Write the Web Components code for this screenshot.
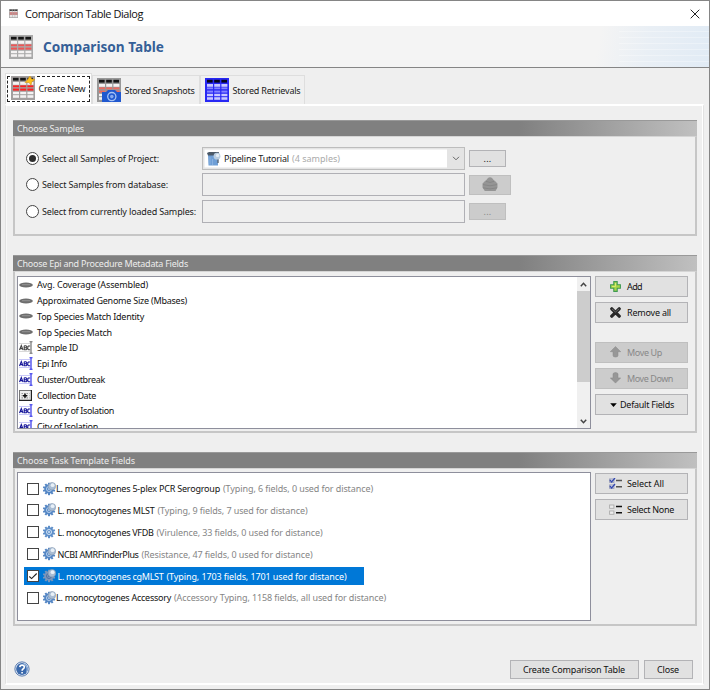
<!DOCTYPE html>
<html lang="en">
<head>
<meta charset="utf-8">
<title>Comparison Table Dialog</title>
<style>
html,body{margin:0;height:100%;overflow:hidden}
body{font:9px "Noto Sans","Open Sans",sans-serif;color:#1a1a1a}
</style>
</head>
<body>
<comparison-dialog></comparison-dialog>
<script>
const define = (name, html, setup) => customElements.define(name, class extends HTMLElement {
  connectedCallback() {
    if (this.shadowRoot) return;
    const t = document.createElement('template');
    t.innerHTML = typeof html === 'function' ? html(this) : html;
    this.attachShadow({mode: 'open'}).append(document.importNode(t.content, true));
    if (setup) setup(this);
  }
});

/* Icon drawings: [width, height, markup] */
const table = (a, b, head = '#151515', body = '#f4f2f2') => `
 <rect width="24" height="24" fill="${a}"/>
 ${[2, 9.2, 16.4].map(x => `<rect x="${x}" y="1.8" width="5.6" height="2.8" fill="${head}"/><rect x="${x}" y="6" width="6" height="2.8" fill="${body}"/><rect x="${x}" y="9.4" width="6" height="1.8" fill="${b}"/><rect x="${x}" y="12.6" width="6" height="2" fill="${b}"/><rect x="${x}" y="15.8" width="6" height="2.4" fill="${body}"/><rect x="${x}" y="19.2" width="6" height="2.6" fill="${body}"/>`).join('')}`;
const teeth = (cx, cy, r, c) => Array.from({length: 10}, (_, i) => `<rect x="${cx - 1}" y="${cy - r}" width="2" height="3" fill="${c}" transform="rotate(${i * 36} ${cx} ${cy})"/>`).join('');
const gear = (c, d) => `${teeth(6, 7, 6.2, c)}<circle cx="6" cy="7" r="4.7" fill="${c}"/><circle cx="6" cy="7" r="2.5" fill="none" stroke="${d}" stroke-width="1"/><circle cx="6" cy="7" r="1" fill="${d}"/>`;
const ball = `<circle cx="9" cy="4.2" r="3.7" fill="#a9bdd4" stroke="#8498b2" stroke-width=".6"/><circle cx="9.6" cy="3.2" r="1.9" fill="#e8f0f7"/>`;
const abc = (c, d) => `<path d="M0 2.5H11M0 10.5H11" stroke="${d}" stroke-width=".7" opacity=".35"/><path d="M.5 9 2.3 4.6 4 9M1 7.6H3.6M5.2 4.7V8.8H7.3L8 7.7 7 6.7H5.4M7 6.7 7.7 5.7 7 4.7H5.2M11.2 5H9.4L8.8 6V8L9.5 8.8H11.2" fill="none" stroke="${c}" stroke-width="1.1"/><path d="M10.5 .7H13.5M12 .7V12.3M10.5 12.3H13.5" stroke="${d}" stroke-width="1.1" fill="none"/>`;
const arrow = `M5.5 .5 10.7 5.7H8V9.5Q8 11 5.5 11T3 9.5V5.7H.3Z`;
const list = (c, l, tick) => `<g fill="#eee" stroke="${c}" stroke-width=".9"><rect x=".6" y="1" width="4.3" height="3.3"/><rect x=".6" y="7" width="4.3" height="3.3"/></g>${tick ? `<path d="M1 2 2.6 4 6 0M1 8 2.6 10 6 6" stroke="#3348b0" stroke-width="1.3" fill="none"/>` : ''}<path d="M7 2.6H13M7 8.8H13" stroke="${l}" stroke-width="1.5"/>`;
const ICONS = {
  table: [24, 24, table('#a9a9a9', '#ee5656')],
  tableNew: [24, 24, table('#a39f9f', '#ff2020') + '<path d="M19 0 20.5 3 24 3.6 20.8 5.8 20 9 18 6.5 14 6.6 16.7 3.6Z" fill="#fcc21d" stroke="#d79517" stroke-width=".6"/>'],
  tableSnap: [24, 24, table('#989898', '#ee6b60') + '<path d="M5 14H9L11 12H18L20 14H24V24H5Z" fill="#2058cf"/><circle cx="14.8" cy="18.6" r="4.1" fill="#2058cf" stroke="#a8c4f4" stroke-width="1.3"/><circle cx="14.8" cy="18.6" r="1.8" fill="#86aaf0"/>'],
  tableBlue: [24, 24, table('#2828f4', '#8484ff', '#05051c', '#c8c8ff')],
  close: [10, 10, '<path d="M.7 .7 9.3 9.3M9.3 .7 .7 9.3" stroke="#222" stroke-width="1"/>'],
  project: [14, 14, '<path d="M1 2.5H11V13.5H1.5Z" fill="#6f9fd6"/><path d="M0 1 2 0H12L11 3.5H1Z" fill="#4b5968"/><path d="M3 5V12.5M5.5 7V13" stroke="#8ab2e0" stroke-width="1"/><path d="M11 6V11" stroke="#5a6674" stroke-width="1.4"/><circle cx="10" cy="4.2" r="3.4" fill="#b9cde0"/><circle cx="10.6" cy="3.4" r="1.7" fill="#e6eef5"/>'],
  chevron: [8, 5, '<path d="M1 .8 4 3.8 7 .8" fill="none" stroke="#666" stroke-width="1"/>'],
  up: [7, 5, '<path d="M.8 4.2 3.5 1.3 6.2 4.2" fill="none" stroke="#444" stroke-width="1.5"/>'],
  down: [7, 5, '<path d="M.8 .8 3.5 3.7 6.2 .8" fill="none" stroke="#444" stroke-width="1.5"/>'],
  database: [16, 15, '<path d="M3 4Q5 2.5 5.5 1.5 8 -.8 10.5 1.5 11 2.5 13 4L15.5 6.5V10.5L13.5 14H2.8L.5 10.5V6.5Z" fill="#959595"/><path d="M1 7.6Q8 10 15 7.6M1 10.8Q8 13 15 10.8M4 4.4Q8 6.5 12 4.4" fill="none" stroke="#858585" stroke-width=".9"/>'],
  disc: [14, 6, '<ellipse cx="7" cy="3" rx="6.8" ry="2.6" fill="#6e6e6e"/><path d="M3 2.7H11" stroke="#929292" stroke-width="1.1"/>'],
  abcGrey: [14, 13, abc('#444', '#666')],
  abcBlue: [14, 13, abc('#16169a', '#2020e8')],
  date: [13, 11, '<rect x=".5" y=".5" width="12" height="10" fill="#eee" stroke="#777"/><path d="M0 10.4H13M12.4 0V11" stroke="#222" stroke-width="1.2"/><path d="M2.5 3.5H10.5M2.5 5.7H10.5M2.5 7.8H10.5" stroke="#999" stroke-width="1.2" stroke-dasharray="1.5 1"/><path d="M4 5.7H8M6 3.7V7.7" stroke="#111" stroke-width="1.6"/>'],
  plus: [11, 11, '<path d="M3.8 .6H7.2V3.8H10.4V7.2H7.2V10.4H3.8V7.2H.6V3.8H3.8Z" fill="#a8d649" stroke="#3f9a54" stroke-width="1.1"/><path d="M5.5 2V5.5H2" stroke="#d9ec70" fill="none"/>'],
  cross: [11, 11, '<path d="M1.8 1.8 9.2 9.2M9.2 1.8 1.8 9.2" stroke="#292929" stroke-width="3.3" stroke-linecap="round"/><path d="M2 2 5.5 5 9 2" stroke="#777" stroke-width=".8" fill="none"/>'],
  moveUp: [11, 12, `<path d="${arrow}" fill="#979797" stroke="#888" stroke-width=".5"/>`],
  moveDown: [11, 12, `<path d="${arrow}" transform="rotate(180 5.5 5.8)" fill="#979797" stroke="#888" stroke-width=".5"/>`],
  triangle: [7, 4, '<path d="M.2 .2H6.8L3.5 3.9Z" fill="#000"/>'],
  all: [13, 11, list('#8d93b5', '#555', true)],
  none: [13, 11, list('#aaa', '#111', false)],
  gear: [13, 14, gear('#5e8fc9', '#d5e5f5')],
  gearBall: [13, 14, gear('#5486c4', '#b9d1ec') + ball],
  gearSel: [13, 14, gear('#7c96ba', '#4d6fa2') + ball],
  check: [12, 12, '<path d="M2.3 6.5 4.6 8.6 9.7 3.5" fill="none" stroke="#222" stroke-width="1.1"/>'],
  help: [16, 16, '<circle cx="8" cy="8" r="7.1" fill="#f3f7fc" stroke="#5478ae" stroke-width="1"/><circle cx="8" cy="8" r="5.9" fill="#3a69ac"/><path d="M9 2.5A5.6 5.6 0 0 1 12 12Q14 6 9 2.5Z" fill="#96b6de"/><path d="M5.8 6.1Q6 4.1 8.1 4.1T10.3 6Q10.3 7.2 9 8 8.1 8.5 8.1 9.7M8.1 11V12.4" fill="none" stroke="#fff" stroke-width="1.6"/>']
};
define('ui-icon', el => {
  const [w, h, body] = ICONS[el.getAttribute('name')];
  const s = el.getAttribute('size');
  return `<style>:host{display:block;flex:none}svg{display:block}</style><svg width="${s || w}" height="${s || h}" viewBox="0 0 ${w} ${h}">${body}</svg>`;
});

define('ui-button', `<style>
:host{display:flex;align-items:center;justify-content:center;box-sizing:border-box;height:21px;border:1px solid #b3b3b6;background:#e1e1e1;color:#111}
:host([disabled]){background:#ccc;border-color:#bfbfbf;color:#888}
:host([side]){justify-content:flex-start;padding-left:14px}
.i{width:17px;display:flex;align-items:center}
:host(:not([side])) .i{display:none}
:host([narrow]) .i{width:10px}
</style><span class="i"><slot name="icon"></slot></span><slot></slot>`);

define('group-box', el => `<style>
:host{display:flex;flex-direction:column;box-sizing:border-box}
header{height:16px;display:flex;align-items:center;flex:none;padding-left:4px;box-sizing:border-box;color:#ececec;background:linear-gradient(90deg,#808080 0,#808080 74%,#c0c0c0);border-top:1px solid #999}
.body{flex:1;min-height:0;box-sizing:border-box;border:2px solid #c6c6c6;border-top:1px solid #d5d5d5;display:flex}
</style><header><fit-text w="${el.getAttribute('w')}">${el.getAttribute('label')}</fit-text></header><div class="body"><slot></slot></div>`);

define('radio-row', el => `<style>
:host{display:grid;grid-template-columns:27px 160px 263px auto;align-items:center;height:26.3px;justify-content:start}
i{width:11px;height:11px;border:1px solid #444;border-radius:50%;background:#fff;display:flex;justify-self:start;margin-left:11px}
:host([checked]) i::after{content:"";width:7px;height:7px;margin:2px;border-radius:50%;background:#2d2d2d}
.f{height:23px;box-sizing:border-box;border:1px solid #b0b0b5;display:flex;align-items:center}
:host([checked]) .f{background:#fff;border-color:#bdbdbd;box-shadow:inset 0 0 0 1.5px #e4e4e4}
.b{padding-left:4px}
</style><i></i><fit-text w="${el.getAttribute('w')}">${el.getAttribute('label')}</fit-text><div class="f"><slot name="field"></slot></div><div class="b"><slot name="button"></slot></div>`);

define('field-item', el => `<style>
:host{display:flex;align-items:center;height:15.75px;flex:none}
.i{width:18px}
</style><span class="i"><ui-icon name="${el.getAttribute('icon')}"></ui-icon></span><slot></slot>`);

define('task-item', el => `<style>
:host{display:flex;align-items:center;height:18px;margin-bottom:3.9px;padding-left:3px;width:337px;box-sizing:content-box;flex:none;white-space:nowrap}
:host([selected]){background:#0078d7;--name:#fff;--info:#fff}
.c{box-sizing:border-box;width:12px;height:12px;border:1px solid #444;background:#fff;margin-right:4px;flex:none;display:flex}
.c ui-icon{margin:-1px}
.n{color:var(--name,#111)}
.d{color:var(--info,#858585);margin-left:3px}
</style><span class="c">${el.hasAttribute('selected') ? '<ui-icon name="check"></ui-icon>' : ''}</span><ui-icon name="${el.getAttribute('icon')}"></ui-icon><span style="width:1.5px"></span><fit-text class="n" w="${el.getAttribute('nw')}">${el.getAttribute('label')}</fit-text><fit-text class="d" w="${el.getAttribute('dw')}">${el.getAttribute('info')}</fit-text>`);

define('scroll-bar', `<style>
:host{display:flex;flex-direction:column;width:13px;background:#f0f0f0;flex:none}
span{height:14px;display:flex;align-items:center;justify-content:center}
b{height:91px;background:#cdcdcd}
span:last-child{margin-top:auto}
</style><span><ui-icon name="up"></ui-icon></span><b></b><span><ui-icon name="down"></ui-icon></span>`);

define('tab-item', `<style>
:host{display:flex;align-items:center;box-sizing:border-box;height:29px;border:1px solid #dedede;border-bottom:0;background:#f0f0f0;padding-left:4px;gap:4.5px}
:host([active]){height:31px;background:#fff;padding:0 0 2px 5px}
.in{position:absolute;display:none;outline:1px dashed #222;outline-offset:-1px}
:host([active]) .in{display:block;left:7px;top:76px;width:83px;height:26px}
::slotted(*){position:relative}
</style><span class="in"></span><slot></slot>`);

define('comparison-dialog', `<style>
:host{display:flex;flex-direction:column;width:710px;height:690px;box-sizing:border-box;border:1px solid #858585;background:#efefef}
.title{height:25px;flex:none;background:#fff;display:flex;align-items:center;padding:0 9px 0 8px;font:11px "Open Sans","Noto Sans",sans-serif;color:#111}
.title .t{margin-left:7px;flex:1}
.head{height:42px;flex:none;box-sizing:border-box;border-bottom:1px solid #858585;display:flex;align-items:center;padding-left:8px;gap:10px;font-size:13.6px;font-weight:bold;color:#355f97;
 background:repeating-linear-gradient(0deg,transparent 0 5px,rgba(255,255,255,.3) 5px 6px) right/90px 100% no-repeat,linear-gradient(100deg,#f4f4f4 84%,#e9eff5 91%,#e1ebf5)}
.tabs{display:flex;align-items:flex-end;height:31px;flex:none;margin:5px 0 0 4px}
.pane{flex:1;min-height:0;margin:0 5px 4px 4px;box-sizing:border-box;border:1px solid #e2e2e2;border-top:2px solid #fff;border-bottom:2px solid #fff;box-shadow:inset -1px 0 #fff,inset 1px 0 #f8f8f8;padding:14px 6.5px 0 7px;display:flex;flex-direction:column}
.radios{display:flex;flex-direction:column;padding-top:8.5px}
.listwrap{display:flex;align-items:flex-start;gap:4px;padding:4px 0 0 2px}
.list{box-sizing:border-box;width:574px;border:1px solid #8e8f9c;background:#fff;display:flex}
.fields{height:153px;padding-left:1px}
.items{flex:1;height:151px;overflow:hidden;display:flex;flex-direction:column;color:#111}
.tasks{height:149px;flex-direction:column;padding:6.5px 0 0 6px}
.col{width:93px;display:flex;flex-direction:column;gap:5.3px}
.foot{display:flex;align-items:center;height:18px;margin-top:34px;padding-left:1px}
.foot ui-button{height:19px}
</style>
<div class="title"><ui-icon name="table" size="9"></ui-icon><fit-text class="t" w="118">Comparison Table Dialog</fit-text><ui-icon name="close"></ui-icon></div>
<div class="head"><ui-icon name="table"></ui-icon><fit-text w="121">Comparison Table</fit-text></div>
<div class="tabs">
<tab-item active style="width:87px"><ui-icon name="tableNew"></ui-icon><fit-text w="47" style="margin-left:-1px">Create New</fit-text></tab-item>
<tab-item style="width:108px"><ui-icon name="tableSnap"></ui-icon><fit-text w="70" style="margin-left:-1px">Stored Snapshots</fit-text></tab-item>
<tab-item style="width:105px"><ui-icon name="tableBlue"></ui-icon><fit-text w="68" style="margin-left:-1px">Stored Retrievals</fit-text></tab-item>
</div>
<div class="pane">
<group-box label="Choose Samples" w="67" style="height:116px"><div class="radios">
<radio-row checked label="Select all Samples of Project:" w="117"><div slot="field" style="display:flex;align-items:center;width:261px;height:21px"><ui-icon name="project" style="margin:0 3px 0 4px"></ui-icon><fit-text w="65" style="margin-right:3px">Pipeline Tutorial</fit-text><fit-text w="48" style="color:#aaa;flex:1">(4 samples)</fit-text><span style="background:#e4e4e4;width:17px;height:21px;display:flex;align-items:center;justify-content:center"><ui-icon name="chevron"></ui-icon></span></div><ui-button slot="button" style="width:37px;height:17px"><fit-text w="8">...</fit-text></ui-button></radio-row>
<radio-row label="Select Samples from database:" w="126"><ui-button disabled slot="button" style="width:42px;height:20px"><ui-icon name="database"></ui-icon></ui-button></radio-row>
<radio-row label="Select from currently loaded Samples:" w="154"><ui-button disabled slot="button" style="width:37px;height:17px"><fit-text w="8">...</fit-text></ui-button></radio-row>
</div></group-box>
<group-box label="Choose Epi and Procedure Metadata Fields" w="171" style="height:178px;margin-top:19px"><div class="listwrap">
<div class="list fields"><div class="items">
<field-item icon="disc"><fit-text w="111">Avg. Coverage (Assembled)</fit-text></field-item>
<field-item icon="disc"><fit-text w="150">Approximated Genome Size (Mbases)</fit-text></field-item>
<field-item icon="disc"><fit-text w="107">Top Species Match Identity</fit-text></field-item>
<field-item icon="disc"><fit-text w="75">Top Species Match</fit-text></field-item>
<field-item icon="abcGrey"><fit-text w="41">Sample ID</fit-text></field-item>
<field-item icon="abcBlue"><fit-text w="30">Epi Info</fit-text></field-item>
<field-item icon="abcBlue"><fit-text w="68">Cluster/Outbreak</fit-text></field-item>
<field-item icon="date"><fit-text w="59">Collection Date</fit-text></field-item>
<field-item icon="abcBlue"><fit-text w="77">Country of Isolation</fit-text></field-item>
<field-item icon="abcBlue"><fit-text w="61">City of Isolation</fit-text></field-item>
</div><scroll-bar></scroll-bar></div>
<div class="col">
<ui-button side><ui-icon slot="icon" name="plus"></ui-icon><fit-text w="15">Add</fit-text></ui-button>
<ui-button side><ui-icon slot="icon" name="cross"></ui-icon><fit-text w="44">Remove all</fit-text></ui-button>
<ui-button side disabled style="margin-top:13px"><ui-icon slot="icon" name="moveUp"></ui-icon><fit-text w="35">Move Up</fit-text></ui-button>
<ui-button side disabled><ui-icon slot="icon" name="moveDown"></ui-icon><fit-text w="46">Move Down</fit-text></ui-button>
<ui-button side narrow><ui-icon slot="icon" name="triangle"></ui-icon><fit-text w="54">Default Fields</fit-text></ui-button>
</div></div></group-box>
<group-box label="Choose Task Template Fields" w="118" style="height:174px;margin-top:19px"><div class="listwrap" style="padding-top:3px">
<div class="list tasks">
<task-item icon="gearBall" label="L. monocytogenes 5-plex PCR Serogroup" nw="164" info="(Typing, 6 fields, 0 used for distance)" dw="150"></task-item>
<task-item icon="gearBall" label="L. monocytogenes MLST" nw="97" info="(Typing, 9 fields, 7 used for distance)" dw="150"></task-item>
<task-item icon="gear" label="L. monocytogenes VFDB" nw="96" info="(Virulence, 33 fields, 0 used for distance)" dw="166"></task-item>
<task-item icon="gearBall" label="NCBI AMRFinderPlus" nw="81" info="(Resistance, 47 fields, 0 used for distance)" dw="171"></task-item>
<task-item selected icon="gearSel" label="L. monocytogenes cgMLST" nw="106" info="(Typing, 1703 fields, 1701 used for distance)" dw="180"></task-item>
<task-item icon="gearBall" label="L. monocytogenes Accessory" nw="115" info="(Accessory Typing, 1158 fields, all used for distance)" dw="212"></task-item>
</div>
<div class="col" style="padding-top:1px">
<ui-button side><ui-icon slot="icon" name="all" style="margin-left:-1px"></ui-icon><fit-text w="37">Select All</fit-text></ui-button>
<ui-button side><ui-icon slot="icon" name="none" style="margin-left:-1px"></ui-icon><fit-text w="47">Select None</fit-text></ui-button>
</div></div></group-box>
<div class="foot"><ui-icon name="help"></ui-icon><ui-button style="width:129px;margin-left:auto"><fit-text w="102">Create Comparison Table</fit-text></ui-button><ui-button style="width:49px;margin:0 4px 0 5px"><fit-text w="22">Close</fit-text></ui-button></div>
</div>`);

/* Text whose tracking is adjusted so that it fills the advance width given by "w". */
define('fit-text', `<style>:host{display:block;white-space:nowrap}span{display:inline-block}</style><span><slot></slot></span>`, el => {
  const span = el.shadowRoot.querySelector('span');
  const n = el.textContent.length;
  span.style.letterSpacing = (el.getAttribute('w') - span.getBoundingClientRect().width) / n + 'px';
});
</script>
</body>
</html>
